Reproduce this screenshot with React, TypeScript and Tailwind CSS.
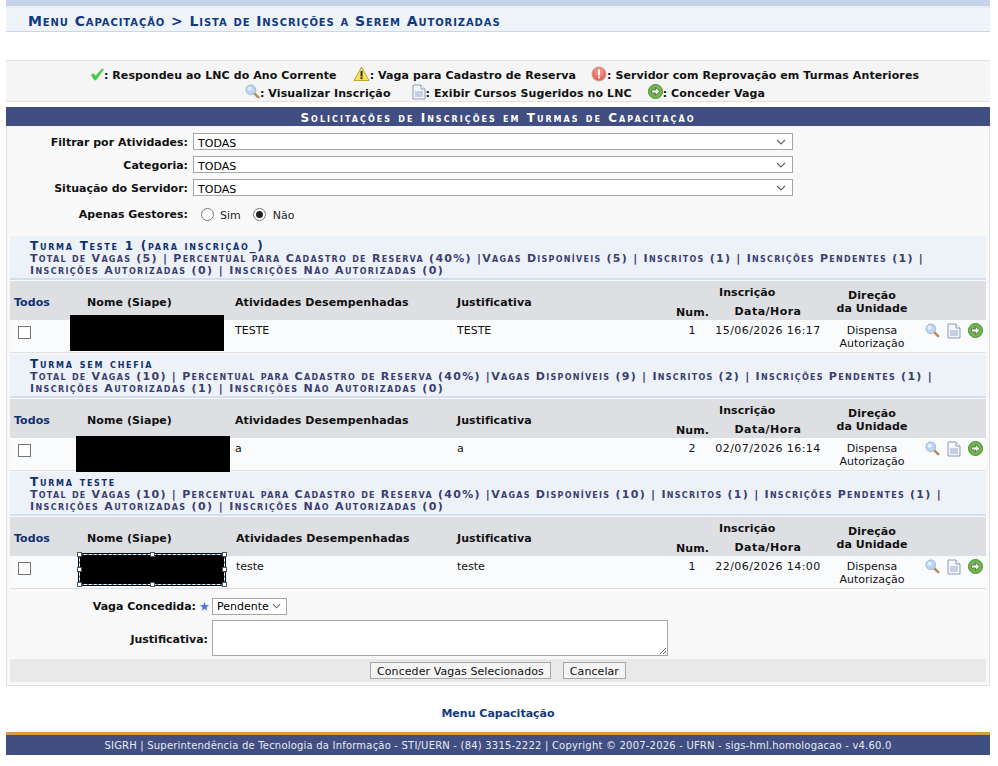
const font = "[font-family:'DejaVu_Sans',Verdana,sans-serif]"

function Check() {
  return (
    <svg width="14" height="14" viewBox="0 0 14 14" className="inline-block">
      <path d="M1 8 L3.5 6.5 L5.5 9 L12.5 1.5 L13.5 2.5 L6 13 L4.5 13 Z" fill="#35d435" stroke="#7fb58a" strokeWidth="0.6" />
    </svg>
  )
}
function Warn() {
  return (
    <svg width="17" height="16" viewBox="0 0 17 16" className="inline-block">
      <path d="M8.5 1 L16 14.5 L1 14.5 Z" fill="#f6e25a" stroke="#b9a53a" strokeLinejoin="round" />
      <rect x="7.6" y="5" width="1.9" height="5.5" fill="#222" />
      <rect x="7.6" y="11.2" width="1.9" height="1.9" fill="#222" />
    </svg>
  )
}
function Stop() {
  return (
    <svg width="16" height="16" viewBox="0 0 16 16" className="inline-block">
      <circle cx="8" cy="8" r="7" fill="#e8695c" stroke="#c9a49c" />
      <circle cx="8" cy="6" r="5" fill="#f08a7c" />
      <rect x="7" y="3.2" width="2" height="6" fill="#fff" />
      <rect x="7" y="10.4" width="2" height="2" fill="#fff" />
    </svg>
  )
}
function Lens() {
  return (
    <svg width="15" height="15" viewBox="0 0 16 16" className="inline-block">
      <path d="M9.5 9.5 L14 14" stroke="#c08a55" strokeWidth="2.8" strokeLinecap="round" />
      <circle cx="6.2" cy="6.2" r="5.2" fill="#bcd4f2" stroke="#9db9dc" />
      <circle cx="5" cy="5" r="2.2" fill="#e6f0fb" />
    </svg>
  )
}
function Doc() {
  return (
    <svg width="14" height="16" viewBox="0 0 14 16" className="inline-block">
      <path d="M1 1 H9 L13 5 V15 H1 Z" fill="#f4f6fb" stroke="#8d9bb5" />
      <path d="M9 1 V5 H13" fill="#fff" stroke="#8d9bb5" />
      <rect x="3" y="7" width="8" height="6" fill="#c5cfe6" />
    </svg>
  )
}
function Go() {
  return (
    <svg width="15" height="15" viewBox="0 0 15 15" className="inline-block">
      <circle cx="7.5" cy="7.5" r="7" fill="#6fb84a" stroke="#4b8a35" />
      <path d="M3.5 6 H7.5 V3.5 L11.8 7.5 L7.5 11.5 V9 H3.5 Z" fill="#eef3ea" stroke="#555" strokeWidth="0.7" />
    </svg>
  )
}
function Star() {
  return (
    <svg width="9" height="9" viewBox="0 0 10 10" className="inline-block">
      <path d="M5 0 L6.3 3.4 L10 3.7 L7.1 6 L8.1 9.7 L5 7.6 L1.9 9.7 L2.9 6 L0 3.7 L3.7 3.4 Z" fill="#4a78d8" />
    </svg>
  )
}

function Select() {
  return (
    <div className="flex h-[17px] w-[600px] items-center justify-between border border-[#a6a6a6] bg-white pl-1 pr-[6px] text-[11px] leading-[13px] text-black">
      <span className="pt-[3px]">TODAS</span>
      <svg width="10" height="6" viewBox="0 0 10 6"><path d="M1 1 L5 5 L9 1" fill="none" stroke="#666" strokeWidth="1.2" /></svg>
    </div>
  )
}

function FilterRow({ label }: { label: string }) {
  return (
    <div className="flex h-[23px] items-center">
      <label className="w-[181px] pt-[3px] text-right text-[11px] font-bold text-[#111]">{label}</label>
      <div className="ml-[5px]"><Select /></div>
    </div>
  )
}

type TurmaProps = {
  nome: string
  linha1: string
  linha2: string
  ativ: string
  just: string
  num: string
  data: string
  box: string
  ativLeft: string
  selected?: boolean
}

function Handle({ pos }: { pos: string }) {
  return <span className={`absolute h-[5px] w-[5px] border border-[#555] bg-white ${pos}`} />
}

function Turma({ nome, linha1, linha2, ativ, just, num, data, box, ativLeft, selected }: TurmaProps) {
  return (
    <div className="ml-[3px] mb-[1px] w-[976px]">
      <div className="h-[44px] border-b-2 border-[#d5def0] bg-[#edf1f8] pl-[20px] text-[11px] font-bold [font-variant:small-caps] leading-[12px] whitespace-nowrap text-[#3a3f70]">
        <div className="pt-[3px] text-[12px] leading-[14px] tracking-[1.75px] text-[#10306f]">{nome}</div>
        <div className="tracking-[1.27px]">{linha1}</div>
        <div className="tracking-[1.37px]">{linha2}</div>
      </div>
      <div className="mt-[1px] flex h-[39px] bg-[#dedfe3] text-[11px] font-bold tracking-[0.08px] text-[#111]">
        <div className="w-[60px] pt-[14px] pl-[4px] text-[#10306f]">Todos</div>
        <div className="w-[165px] pt-[14px] pl-[17px]">Nome (Siape)</div>
        <div className={`w-[222px] pt-[14px] ${ativLeft}`}>Atividades Desempenhadas</div>
        <div className="w-[219px] pt-[14px]">Justificativa</div>
        <div className="w-[32px] pt-[24px] text-center">Num.</div>
        <div className="w-[118px] pt-[4px]">
          <div className="pl-[11px]">Inscrição</div>
          <div className="mt-[2px] pl-[2px] text-center tracking-[0.45px]">Data/Hora</div>
        </div>
        <div className="w-[92px] pt-[8px] text-center leading-[13px]">Direção<br />da Unidade</div>
      </div>
      <div className="relative flex h-[33px] border-b border-[#e0e0e0] bg-[#f9fbfd] text-[11px] text-[#111]">
        <div className="w-[60px] pl-[8px] pt-[6px]">
          <span className="block h-[13px] w-[13px] border border-[#767676] bg-white" />
        </div>
        <div className="w-[165px]" />
        <div className={`w-[222px] pt-[3px] ${ativLeft}`}>{ativ}</div>
        <div className="w-[219px] pt-[3px]">{just}</div>
        <div className="w-[32px] pt-[3px] text-center">{num}</div>
        <div className="w-[118px] pl-[2px] pt-[3px] text-center tracking-[0.42px] whitespace-nowrap">{data}</div>
        <div className="w-[92px] pt-[4px] text-center leading-[13px]">Dispensa<br />Autorização</div>
        <div className="flex items-start gap-[7px] pl-[7px] pt-[3px]">
          <Lens /><Doc /><Go />
        </div>
        <div className={`absolute bg-black ${box}`}>
          {selected && (
            <>
              <span className="absolute inset-[1px] border border-[#1a6fc0]" />
              <span className="absolute inset-[1px] border border-dashed border-white" />
              <Handle pos="-left-[1px] -top-[1px]" />
              <Handle pos="left-[72px] -top-[1px]" />
              <Handle pos="-right-[1px] -top-[1px]" />
              <Handle pos="-left-[1px] top-[14px]" />
              <Handle pos="-right-[1px] top-[14px]" />
              <Handle pos="-left-[1px] -bottom-[1px]" />
              <Handle pos="left-[72px] -bottom-[1px]" />
              <Handle pos="-right-[1px] -bottom-[1px]" />
            </>
          )}
        </div>
      </div>
    </div>
  )
}

export default function App() {
  return (
    <div className={`${font} h-[766px] w-[998px] overflow-hidden bg-white`}>
      <div className="ml-[6px] w-[984px]">
        <div className="h-[6px] bg-[#c4d2eb]" />
        <div className="h-[2px] bg-[#efece6]" />
        <div className="flex h-[24px] items-center border-b border-[#c9d6ec] bg-[#eff3fa] pl-[22px] pt-[3px] text-[14px] font-bold [font-variant:small-caps] tracking-[0.91px] text-[#123a80]">
          Menu Capacitação &gt; Lista de Inscrições a Serem Autorizadas
        </div>

        <div className="mt-[28px] h-[42px] border-y border-[#e2e2e2] bg-[#f5f5f5] text-center text-[11px] font-bold leading-[13px] tracking-[0.1px] text-[#111] [&_svg]:-translate-y-[2px]">
          <div className="flex h-[21px] items-center justify-center pl-[13px] pt-[8px]">
            <Check /><span>: Respondeu ao LNC do Ano Corrente</span>
            <span className="ml-[16px] flex items-center"><Warn /><span>: Vaga para Cadastro de Reserva</span></span>
            <span className="ml-[15px] flex items-center"><Stop /><span>: Servidor com Reprovação em Turmas Anteriores</span></span>
          </div>
          <div className="flex h-[19px] items-center justify-center pl-[14px] pt-[4px]">
            <Lens /><span>: Visualizar Inscrição</span>
            <span className="ml-[21px] flex items-center"><Doc /><span>: Exibir Cursos Sugeridos no LNC</span></span>
            <span className="ml-[16px] flex items-center"><Go /><span>: Conceder Vaga</span></span>
          </div>
        </div>

        <div className="mt-[5px] flex h-[19px] items-center justify-center bg-[#404e82] pt-[3px] text-[12px] font-bold [font-variant:small-caps] tracking-[2.03px] text-white">
          Solicitações de Inscrições em Turmas de Capacitação
        </div>

        <div className="h-[560px] border-x border-b border-[#e2e2e2] bg-[#f9f9f9]">
          <div className="pt-[4px]">
            <FilterRow label="Filtrar por Atividades:" />
            <FilterRow label="Categoria:" />
            <FilterRow label="Situação do Servidor:" />
          </div>
          <div className="mt-[7px] flex h-[16px] items-center text-[11px]">
            <span className="w-[181px] pt-[3px] text-right font-bold text-[#111]">Apenas Gestores:</span>
            <span className="ml-[13px] mr-[6px] h-[13px] w-[13px] rounded-full border border-[#767676] bg-white" />
            <span className="mr-[6px] pt-[4px] text-[#222]">Sim</span>
            <span className="mx-[6px] flex h-[13px] w-[13px] items-center justify-center rounded-full border border-[#767676] bg-white">
              <span className="h-[7px] w-[7px] rounded-full bg-[#222]" />
            </span>
            <span className="ml-[1px] pt-[4px] text-[#222]">Não</span>
          </div>

          <div className="mt-[14px]">
            <Turma
              nome="Turma Teste 1 (para inscrição_)"
              linha1="Total de Vagas (5) | Percentual para Cadastro de Reserva (40%) |Vagas Disponíveis (5) | Inscritos (1) | Inscrições Pendentes (1) |"
              linha2="Inscrições Autorizadas (0) | Inscrições Não Autorizadas (0)"
              ativ="TESTE" just="TESTE" num="1" data="15/06/2026 16:17"
              box="left-[60px] -top-[5px] h-[36px] w-[154px]" ativLeft=""
            />
            <Turma
              nome="Turma sem chefia"
              linha1="Total de Vagas (10) | Percentual para Cadastro de Reserva (40%) |Vagas Disponíveis (9) | Inscritos (2) | Inscrições Pendentes (1) |"
              linha2="Inscrições Autorizadas (1) | Inscrições Não Autorizadas (0)"
              ativ="a" just="a" num="2" data="02/07/2026 16:14"
              box="left-[66px] -top-[2px] h-[36px] w-[154px]" ativLeft=""
            />
            <Turma
              nome="Turma teste"
              linha1="Total de Vagas (10) | Percentual para Cadastro de Reserva (40%) |Vagas Disponíveis (10) | Inscritos (1) | Inscrições Pendentes (1) |"
              linha2="Inscrições Autorizadas (0) | Inscrições Não Autorizadas (0)"
              ativ="teste" just="teste" num="1" data="22/06/2026 14:00"
              box="left-[68px] -top-[3px] h-[33px] w-[148px]" ativLeft="pl-[1px]" selected
            />
          </div>

          <div className="mt-[7px] flex h-[20px] items-center text-[11px]">
            <span className="w-[189px] pt-[3px] text-right font-bold text-[#111]">Vaga Concedida:</span>
            <span className="ml-[4px] mr-[3px] flex"><Star /></span>
            <div className="flex h-[17px] w-[75px] items-center justify-between border border-[#a6a6a6] bg-white pl-[4px] pr-[5px]">
              <span className="pt-[2px]">Pendente</span>
              <svg width="9" height="6" viewBox="0 0 10 6"><path d="M1 1 L5 5 L9 1" fill="none" stroke="#666" strokeWidth="1.2" /></svg>
            </div>
          </div>
          <div className="mt-[4px] flex items-center text-[11px]">
            <span className="w-[201px] pt-[5px] text-right font-bold text-[#111]">Justificativa:</span>
            <div className="relative ml-[4px] h-[36px] w-[456px] border border-[#a6a6a6] bg-white">
              <svg width="8" height="8" viewBox="0 0 8 8" className="absolute bottom-0 right-0"><path d="M1 7 L7 1 M4 7 L7 4" stroke="#666" /></svg>
            </div>
          </div>
          <div className="ml-[3px] mt-[3px] flex h-[23px] w-[976px] items-center justify-center gap-[12px] bg-[#e9e9e9] text-[11px] tracking-[0.07px] text-[#111]">
            <span className="h-[17px] border border-[#a6a6a6] bg-[#f4f4f4] px-[6px] pt-[2px] leading-[13px]">Conceder Vagas Selecionados</span>
            <span className="h-[17px] border border-[#a6a6a6] bg-[#f4f4f4] px-[6px] pt-[2px] leading-[13px]">Cancelar</span>
          </div>
        </div>

        <div className="mt-[20px] text-center text-[11px] leading-[16px] font-bold text-[#123a80]">Menu Capacitação</div>
        <div className="mt-[10px] flex h-[23px] items-center justify-center border-t-[3px] border-[#d99b3f] bg-[#404e82] pt-[1px] text-[10px] tracking-[0.2px] text-[#e8ebf3]">
          SIGRH | Superintendência de Tecnologia da Informação - STI/UERN - (84) 3315-2222 | Copyright © 2007-2026 - UFRN - sigs-hml.homologacao - v4.60.0
        </div>
      </div>
    </div>
  )
}
